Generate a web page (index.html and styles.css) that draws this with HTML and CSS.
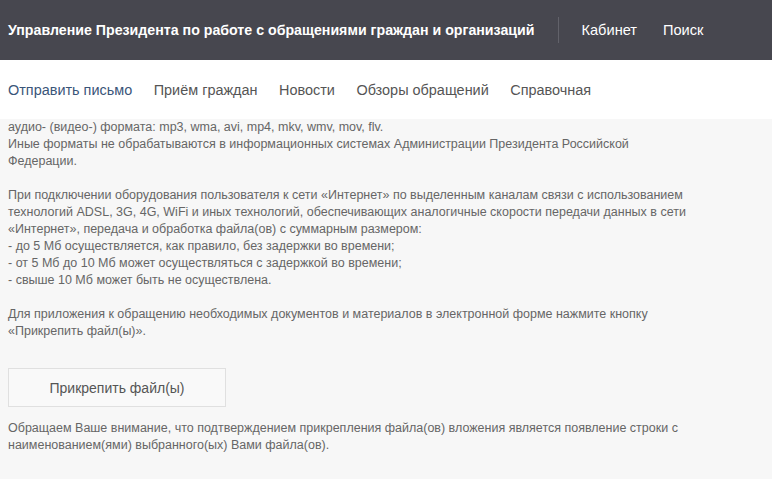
FILE: index.html
```html
<!DOCTYPE html>
<html lang="ru">
<head>
<meta charset="utf-8">
<link rel="stylesheet" href="styles.css">
</head>
<body>
<header class="topbar">
  <div class="brand">Управление Президента по работе с обращениями граждан и организаций</div>
  <span class="divider"></span>
  <a class="toplink" href="#">Кабинет</a>
  <a class="toplink" href="#">Поиск</a>
</header>
<nav class="menu">
  <a class="menu-item active" href="#">Отправить письмо</a>
  <a class="menu-item" href="#">Приём граждан</a>
  <a class="menu-item" href="#">Новости</a>
  <a class="menu-item" href="#">Обзоры обращений</a>
  <a class="menu-item" href="#">Справочная</a>
</nav>
<main class="content">
  <p>аудио- (видео-) формата: mp3, wma, avi, mp4, mkv, wmv, mov, flv.<br>Иные форматы не обрабатываются в информационных системах Администрации Президента Российской Федерации.</p>
  <p>При подключении оборудования пользователя к сети «Интернет» по выделенным каналам связи с использованием технологий ADSL, 3G, 4G, WiFi и иных технологий, обеспечивающих аналогичные скорости передачи данных в сети «Интернет», передача и обработка файла(ов) с суммарным размером:<br>- до 5 Мб осуществляется, как правило, без задержки во времени;<br>- от 5 Мб до 10 Мб может осуществляться с задержкой во времени;<br>- свыше 10 Мб может быть не осуществлена.</p>
  <p>Для приложения к обращению необходимых документов и материалов в электронной форме нажмите кнопку «Прикрепить файл(ы)».</p>
  <button class="attach" type="button">Прикрепить файл(ы)</button>
  <p class="note">Обращаем Ваше внимание, что подтверждением прикрепления файла(ов) вложения является появление строки с наименованием(ями) выбранного(ых) Вами файла(ов).</p>
</main>
</body>
</html>
```
FILE: styles.css
```css
html, body {
  margin: 0;
  padding: 0;
}
body {
  font-family: "Liberation Sans", Arial, sans-serif;
  background: #f7f7f7;
  width: 772px;
  height: 479px;
  overflow: hidden;
}
a {
  text-decoration: none;
}
.topbar {
  height: 60px;
  background: #47474f;
  display: flex;
  align-items: center;
  padding: 0 8px;
  box-sizing: border-box;
}
.brand {
  color: #ffffff;
  font-weight: bold;
  font-size: 14.2px;
  white-space: nowrap;
}
.divider {
  width: 1px;
  height: 26px;
  background: #62626a;
  margin: 0 23px 0 23px;
}
.toplink {
  color: #ffffff;
  font-size: 14.6px;
  margin-right: 26px;
}
.menu {
  height: 59px;
  background: #ffffff;
  display: flex;
  align-items: center;
  gap: 21.5px;
  padding: 0 8px;
}
.menu-item {
  color: #555555;
  font-size: 14.45px;
}
.menu-item.active {
  color: #3a5579;
}
.content {
  padding: 0 8px;
  color: #666666;
  font-size: 12.5px;
  line-height: 17px;
  width: 690px;
}
.content p {
  margin: 0 0 17px 0;
}
.attach {
  display: block;
  width: 218px;
  height: 39px;
  margin: 28px 0 13px 0;
  background: #f9f9f9;
  border: 1px solid #e0e0e0;
  color: #555555;
  font-family: "Liberation Sans", Arial, sans-serif;
  font-size: 14px;
  cursor: pointer;
}
.content .note {
  margin: 0;
}
```
